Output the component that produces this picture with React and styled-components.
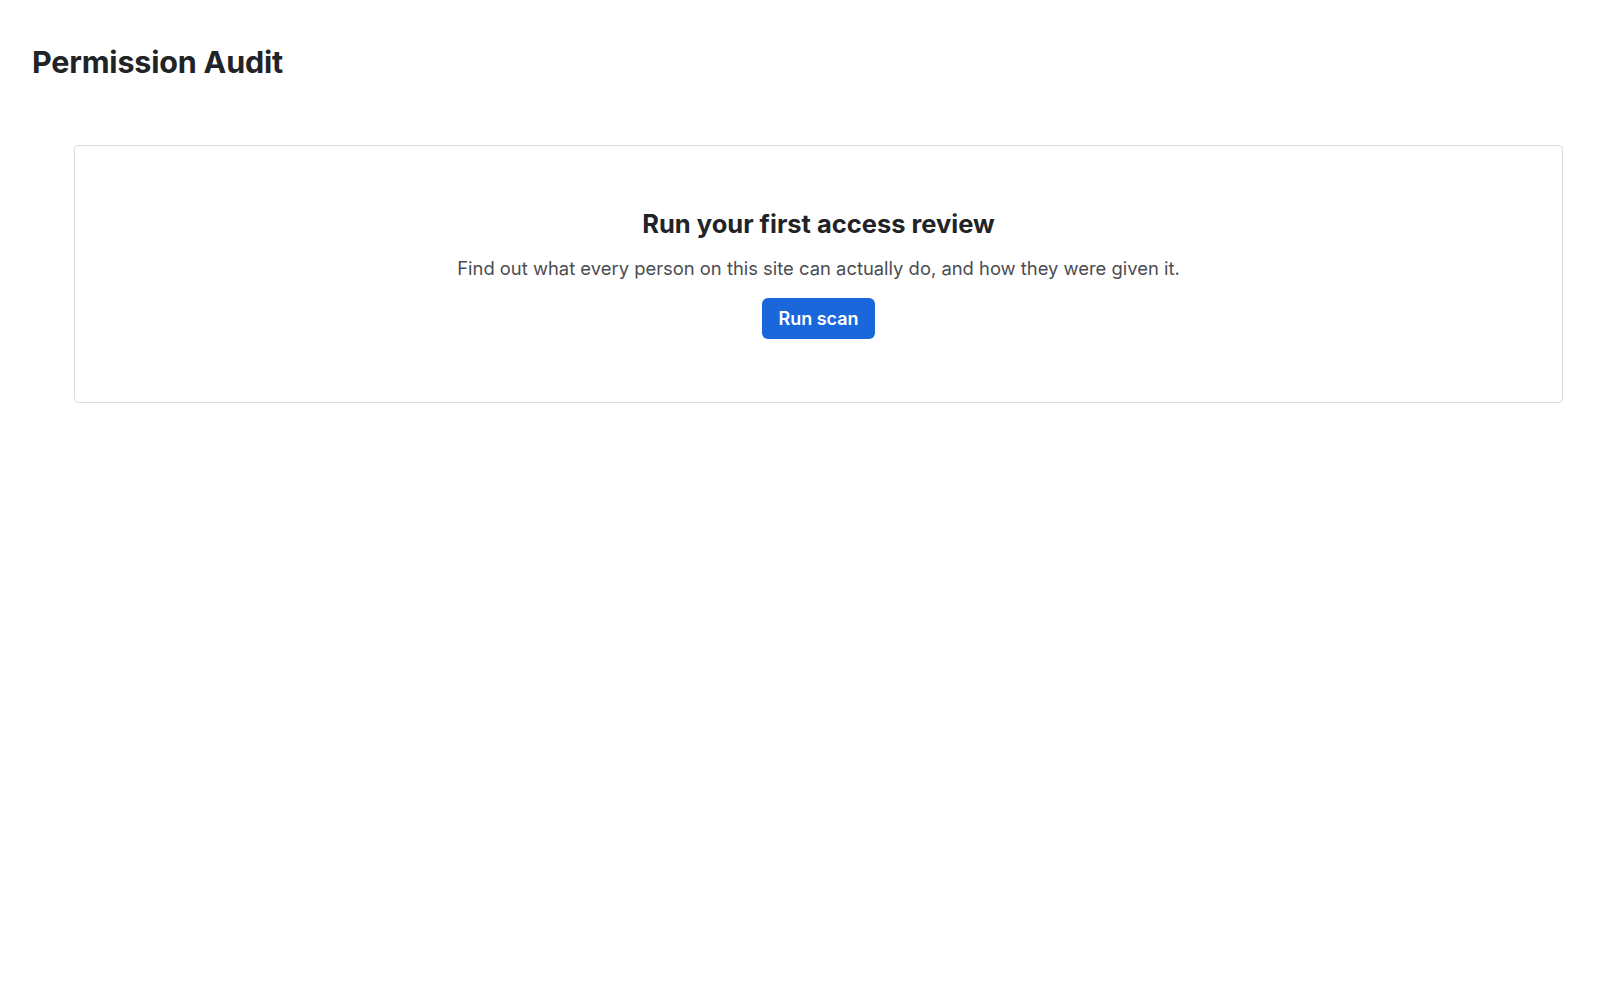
import styled, { createGlobalStyle } from 'styled-components';

const GlobalStyle = createGlobalStyle`
  html, body {
    margin: 0;
    padding: 0;
    background: #fff;
  }

  body {
    font-family: Inter, "Noto Sans", "Liberation Sans", sans-serif;
    color: #1e1e1e;
  }
`;

const Page = styled.div`
  padding: 44px 37px 40px 32px;
`;

const PageTitle = styled.h1`
  margin: 0;
  font-size: 30.5px;
  font-weight: 700;
  line-height: 36px;
  color: #222326;
  letter-spacing: -0.2px;
`;

const Card = styled.section`
  margin: 65px 0 0 42px;
  padding: 62px 24px 63px;
  border: 1px solid #dcdcde;
  border-radius: 4px;
  display: flex;
  flex-direction: column;
  align-items: center;
  text-align: center;
`;

const CardTitle = styled.h2`
  margin: 0;
  font-size: 25.5px;
  font-weight: 700;
  line-height: 31px;
  color: #222326;
`;

const CardText = styled.p`
  margin: 16px 0 0;
  font-size: 18.4px;
  line-height: 27px;
  color: #4b4d52;
`;

const PrimaryButton = styled.button`
  margin-top: 16px;
  height: 41px;
  padding: 0 16px;
  border: none;
  border-radius: 6px;
  background: #1a67dc;
  color: #fff;
  font-family: inherit;
  font-size: 18px;
  font-weight: 600;
  cursor: pointer;

  &:hover {
    opacity: 0.9;
  }
`;

const App = () => {
  return (
    <>
      <GlobalStyle />
      <Page>
        <PageTitle>Permission Audit</PageTitle>

        {/* 빈 상태 카드 */}
        <Card>
          <CardTitle>Run your first access review</CardTitle>
          <CardText>
            Find out what every person on this site can actually do, and how they were given it.
          </CardText>
          <PrimaryButton type="button">Run scan</PrimaryButton>
        </Card>
      </Page>
    </>
  );
};

export default App;
